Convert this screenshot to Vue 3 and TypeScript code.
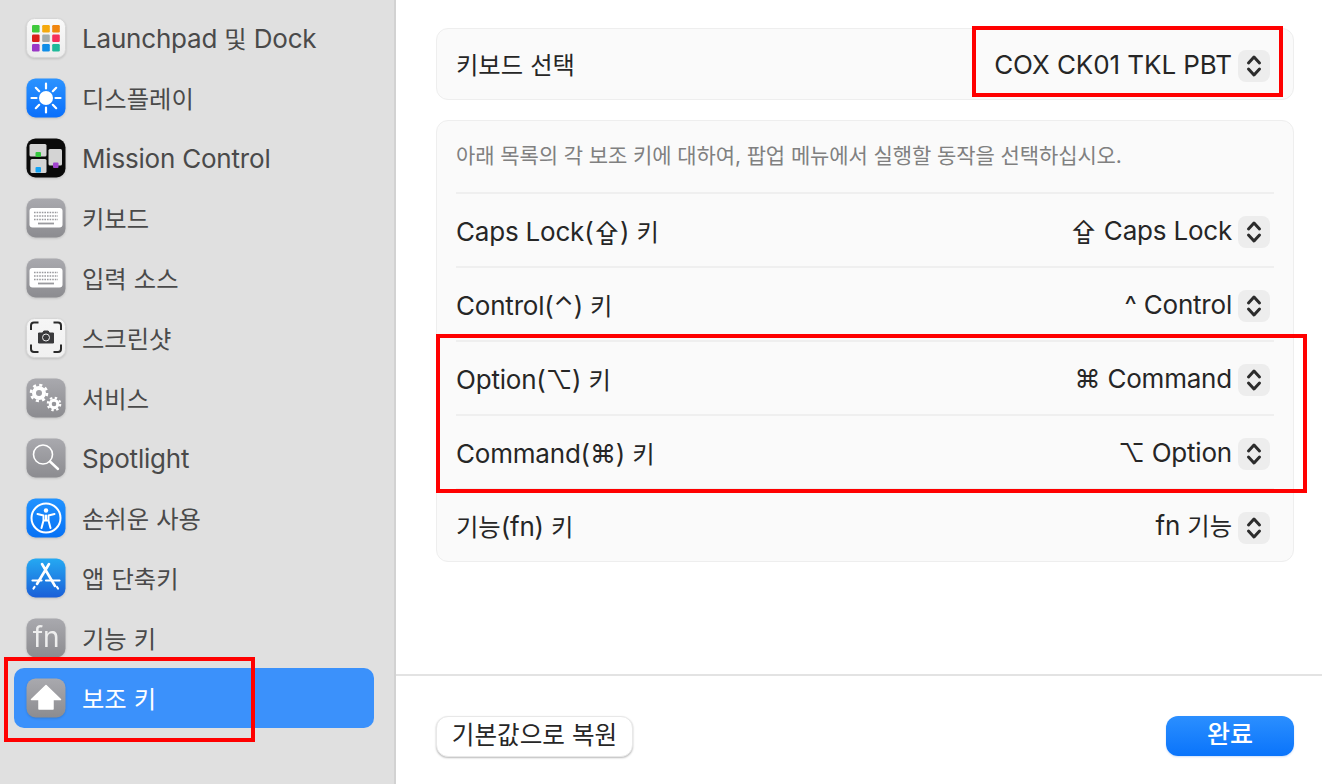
<template>
  <div class="window">
    <aside class="sidebar">
      <div
        v-for="item in navItems"
        :key="item.icon"
        class="nav-row"
        :class="{ active: item.icon === 'modifier' }"
      >
        <svg class="nav-icon" viewBox="0 0 40 40" width="40" height="40">
          <defs>
            <linearGradient :id="'bg-' + item.icon" x1="0" y1="0" x2="0" y2="1">
              <stop offset="0" :stop-color="item.from" />
              <stop offset="1" :stop-color="item.to" />
            </linearGradient>
          </defs>
          <rect
            x="0.5"
            y="0.5"
            width="39"
            height="39"
            :rx="item.icon === 'launchpad' || item.icon === 'screenshot' ? 8 : 9"
            :fill="'url(#bg-' + item.icon + ')'"
            :stroke="item.icon === 'launchpad' || item.icon === 'screenshot' ? '#d6d6d6' : 'none'"
          />

          <g v-if="item.icon === 'launchpad'">
            <rect v-for="t in launchTiles" :key="t.c" :x="t.x" :y="t.y" width="7.6" height="7.4" rx="1.2" :fill="t.c" />
          </g>

          <g v-else-if="item.icon === 'display'">
            <circle cx="20" cy="20" r="7" fill="#fff" />
            <path
              d="M20 5.500v5M20 29.500v5M5.500 20h5M29.500 20h5M9.800 9.800l3.400 3.400M26.800 26.800l3.400 3.400M9.800 30.200l3.400-3.400M26.800 13.200l3.400-3.400"
              stroke="#fff"
              stroke-width="2.200"
              stroke-linecap="round"
            />
          </g>

          <g v-else-if="item.icon === 'mission'">
            <rect x="3.500" y="6" width="17" height="12.500" rx="1.500" fill="#d4d4d4" />
            <rect x="4.500" y="21" width="16" height="14" rx="1.500" fill="#d4d4d4" />
            <rect x="22.500" y="11" width="13.500" height="16.500" rx="1.500" fill="#d4d4d4" />
            <rect x="9.500" y="14" width="5.500" height="5" rx="1" fill="#35c63f" />
            <rect x="9.500" y="29" width="5.500" height="5.500" rx="1" fill="#13a4f5" />
            <rect x="27" y="24.500" width="5.500" height="5.500" rx="1" fill="#a245cf" />
          </g>

          <g v-else-if="item.icon === 'keyboard' || item.icon === 'input'">
            <rect x="3.500" y="10" width="33" height="19.500" rx="3" fill="#fff" />
            <path
              d="M8 14.500h24M8 18h24M8 21.500h24"
              stroke="#9a9a9e"
              stroke-width="1.600"
              stroke-dasharray="1.600 1"
            />
            <path d="M12 25.500h16" stroke="#9a9a9e" stroke-width="1.800" />
          </g>

          <g v-else-if="item.icon === 'screenshot'">
            <path
              d="M5 12V7.500a3 3 0 0 1 3-3h4.500M27.500 4.500H32a3 3 0 0 1 3 3V12M35 26.500V31a3 3 0 0 1-3 3h-4.500M12.500 34H8a3 3 0 0 1-3-3v-4.500"
              fill="none"
              stroke="#2a2a2a"
              stroke-width="2"
            />
            <path d="M12.500 15h4l1.300-2h4.400l1.300 2h4v10H12.500z" fill="#3a3a3c" stroke="#3a3a3c" stroke-linejoin="round" />
            <circle cx="20" cy="19.500" r="3.500" fill="#3a3a3c" stroke="#eee" stroke-width="1" />
          </g>

          <g v-else-if="item.icon === 'services'" fill="none" stroke="#fff">
            <circle cx="13" cy="15" r="5" stroke-width="4" />
            <circle cx="13" cy="15" r="8" stroke-width="2.600" stroke-dasharray="3.100 3.180" />
            <circle cx="28" cy="26" r="3.800" stroke-width="3" />
            <circle cx="28" cy="26" r="6.200" stroke-width="2.200" stroke-dasharray="2.400 2.470" />
          </g>

          <g v-else-if="item.icon === 'spotlight'" fill="none" stroke="#fff">
            <circle cx="17" cy="16.500" r="9.500" stroke-width="1.600" />
            <path d="M24 23.500L32 31" stroke-width="2.400" stroke-linecap="round" />
          </g>

          <g v-else-if="item.icon === 'access'">
            <circle cx="20" cy="20" r="14.500" fill="none" stroke="#fff" stroke-width="2" />
            <circle cx="20" cy="12.500" r="2.200" fill="#fff" />
            <path
              d="M11.500 16l6 1.500v5l-2 7.500M28.500 16l-6 1.500v5l2 7.500M17.500 22.500h5M20 17.500v5"
              fill="none"
              stroke="#fff"
              stroke-width="2"
              stroke-linecap="round"
              stroke-linejoin="round"
            />
          </g>

          <g v-else-if="item.icon === 'shortcuts'" fill="none" stroke="#fff" stroke-linecap="round">
            <path d="M23 6L11 26M16 6l13 22" stroke-width="2.600" />
            <path d="M6.500 22.500h9M20 22.500h13.500" stroke-width="2.200" />
            <path d="M8.500 29l-1 1.500M31 29l1 1.500" stroke-width="2.200" />
          </g>

          <text v-else-if="item.icon === 'fn'" x="20" y="28.500" text-anchor="middle" class="fn-glyph">fn</text>

          <path
            v-else-if="item.icon === 'modifier'"
            d="M20 7.500L34.500 21.500H27V31H13V21.500H5.500z"
            fill="#fff"
            stroke="#fff"
            stroke-width="1.500"
            stroke-linejoin="round"
          />
        </svg>
        <span class="nav-label">
          <span v-for="(r, i) in runs(item.label)" :key="i" :class="{ ko: r.ko }">{{ r.text }}</span>
        </span>
      </div>
    </aside>

    <main class="content">
      <div class="scroll">
        <section class="card">
          <div class="row top-row">
            <span class="label">
              <span v-for="(r, i) in runs('키보드 선택')" :key="i" :class="{ ko: r.ko }">{{ r.text }}</span>
            </span>
            <div class="select">
              <span class="value">COX CK01 TKL PBT</span>
              <span class="stepper">
                <svg viewBox="0 0 32 32" width="32" height="32">
                  <path d="M10.500 13L16 7l5.500 6M10.500 19L16 25l5.500-6" />
                </svg>
              </span>
            </div>
          </div>
        </section>

        <section class="card">
          <p class="hint">아래 목록의 각 보조 키에 대하여, 팝업 메뉴에서 실행할 동작을 선택하십시오.</p>
          <div v-for="row in keyRows" :key="row.label" class="row key-row">
            <span class="label">
              <span v-for="(r, i) in runs(row.label)" :key="i" :class="{ ko: r.ko }">{{ r.text }}</span>
            </span>
            <div class="select">
              <span class="value">
                <span v-for="(r, i) in runs(row.value)" :key="i" :class="{ ko: r.ko }">{{ r.text }}</span>
              </span>
              <span class="stepper">
                <svg viewBox="0 0 32 32" width="32" height="32">
                  <path d="M10.500 13L16 7l5.500 6M10.500 19L16 25l5.500-6" />
                </svg>
              </span>
            </div>
          </div>
        </section>
      </div>

      <footer class="footer">
        <button class="btn">기본값으로 복원</button>
        <button class="btn primary">완료</button>
      </footer>
    </main>

    <div class="mark mark-nav"></div>
    <div class="mark mark-select"></div>
    <div class="mark mark-keys"></div>
  </div>
</template>

<script setup lang="ts">
const navItems = [
  { icon: 'launchpad', label: 'Launchpad 및 Dock', from: '#fafafa', to: '#ececec' },
  { icon: 'display', label: '디스플레이', from: '#2b93ff', to: '#0a6ffb' },
  { icon: 'mission', label: 'Mission Control', from: '#0a0a0a', to: '#0a0a0a' },
  { icon: 'keyboard', label: '키보드', from: '#a9a9ae', to: '#8c8c90' },
  { icon: 'input', label: '입력 소스', from: '#a9a9ae', to: '#8c8c90' },
  { icon: 'screenshot', label: '스크린샷', from: '#f6f6f6', to: '#f0f0f0' },
  { icon: 'services', label: '서비스', from: '#a9a9ae', to: '#8c8c90' },
  { icon: 'spotlight', label: 'Spotlight', from: '#a9a9ae', to: '#8c8c90' },
  { icon: 'access', label: '손쉬운 사용', from: '#2193ff', to: '#0671f5' },
  { icon: 'shortcuts', label: '앱 단축키', from: '#25a9f2', to: '#1a5fd8' },
  { icon: 'fn', label: '기능 키', from: '#a9a9ae', to: '#8c8c90' },
  { icon: 'modifier', label: '보조 키', from: '#a9a9ae', to: '#8c8c90' },
]

const launchTiles = [
  { x: 6, y: 7, c: '#3fc93c' },
  { x: 16.2, y: 7, c: '#f5a90e' },
  { x: 26.2, y: 7, c: '#f0860f' },
  { x: 6, y: 16.5, c: '#da1f18' },
  { x: 16.2, y: 16.5, c: '#a3adad' },
  { x: 26.2, y: 16.5, c: '#f5305c' },
  { x: 6, y: 26, c: '#9a37c6' },
  { x: 16.2, y: 26, c: '#0f8de8' },
  { x: 26.2, y: 26, c: '#1fb99a' },
]

const keyRows = [
  { label: 'Caps Lock(⇪) 키', value: '⇪ Caps Lock' },
  { label: 'Control(⌃) 키', value: '^ Control' },
  { label: 'Option(⌥) 키', value: '⌘ Command' },
  { label: 'Command(⌘) 키', value: '⌥ Option' },
  { label: '기능(fn) 키', value: 'fn 기능' },
]

// hangul sits a touch smaller than the latin text in the same label
function runs(text: string) {
  const parts = text.match(/[\uAC00-\uD7A3]+|[^\uAC00-\uD7A3]+/g) || []
  return parts.map((p) => ({ text: p, ko: /[\uAC00-\uD7A3]/.test(p) }))
}
</script>

<style>
html,
body {
  margin: 0;
  height: 100%;
  overflow: hidden;
  background: #fff;
}
</style>

<style scoped>
.window {
  position: relative;
  display: flex;
  width: 1322px;
  height: 784px;
  overflow: hidden;
  font-family: Inter, "Noto Sans CJK KR", "DejaVu Sans", sans-serif;
  font-size: 26px;
  line-height: 32px;
  letter-spacing: -0.2px;
  color: #262626;
}
.ko {
  font-size: 24.3px;
  letter-spacing: 0;
}

.sidebar {
  box-sizing: border-box;
  width: 396px;
  flex: none;
  padding: 8px 20px 0 14px;
  background: #e0e0e0;
  border-right: 2px solid #d2d2d2;
}
.nav-row {
  display: flex;
  align-items: center;
  gap: 16px;
  height: 60px;
  padding-left: 12px;
  border-radius: 10px;
  color: #4a4a4a;
}
.nav-row.active {
  background: #3b91fb;
  color: #fff;
}
.nav-label {
  margin-top: 2px;
}
.nav-icon {
  flex: none;
  filter: drop-shadow(0 1px 1px rgba(0, 0, 0, 0.15));
}
.fn-glyph {
  font-family: Inter, sans-serif;
  font-size: 28px;
  fill: #eee;
}

.content {
  flex: 1;
  display: flex;
  flex-direction: column;
  min-width: 0;
}
.scroll {
  flex: 1;
  padding: 28px 28px 0 40px;
}
.card {
  box-sizing: border-box;
  background: #fafafa;
  border: 1px solid #eeeeee;
  border-radius: 12px;
  padding: 0 19px;
  margin-bottom: 20px;
}
.row {
  display: flex;
  align-items: center;
  justify-content: space-between;
}
.top-row {
  box-sizing: border-box;
  height: 70px;
  padding-top: 3px;
}
.top-row .label {
  margin-top: -1px;
}
.top-row .value {
  margin-top: -1px;
  letter-spacing: -0.07px;
}
.hint {
  margin: 0;
  height: 71px;
  line-height: 70px;
  font-size: 21px;
  letter-spacing: -0.1px;
  color: #808080;
}
.key-row {
  height: 74px;
  box-sizing: border-box;
  padding-top: 4px;
  border-top: 2px solid #efefef;
}
.key-row:last-child {
  height: 73px;
}
.key-row .label {
  margin-top: -1px;
}
.select {
  display: flex;
  align-items: center;
  gap: 6px;
  margin-right: 4px;
}
.value {
  margin-top: -3px;
}
.stepper {
  display: block;
  width: 32px;
  height: 32px;
  background: #ededed;
  border-radius: 8px;
}
.stepper svg {
  display: block;
}
.stepper path {
  fill: none;
  stroke: #2c2c2c;
  stroke-width: 3;
  stroke-linecap: round;
  stroke-linejoin: round;
}

.footer {
  box-sizing: border-box;
  height: 110px;
  display: flex;
  align-items: flex-start;
  justify-content: space-between;
  padding: 40px 28px 0 40px;
  border-top: 2px solid #e3e3e3;
}
.btn {
  box-sizing: border-box;
  width: 197px;
  height: 41px;
  padding: 0 0 4px;
  border: 1px solid #e8e8e8;
  border-radius: 12px;
  background: #fff;
  box-shadow: 0 1px 2px rgba(0, 0, 0, 0.28);
  font: inherit;
  font-size: 24.6px;
  letter-spacing: 0;
  color: #262626;
}
.btn.primary {
  width: 128px;
  height: 40px;
  border: none;
  background: linear-gradient(#2b8fff, #0a74fb);
  box-shadow: 0 1px 2px rgba(0, 90, 220, 0.2);
  font-size: 25px;
  font-weight: 500;
  color: #fff;
}

.mark {
  position: absolute;
  box-sizing: border-box;
  border: 4px solid #ff0000;
  pointer-events: none;
}
.mark-nav {
  left: 4px;
  top: 657px;
  width: 251px;
  height: 85px;
}
.mark-select {
  left: 972px;
  top: 26px;
  width: 311px;
  height: 71px;
}
.mark-keys {
  left: 436px;
  top: 334px;
  width: 871px;
  height: 159px;
}
</style>
